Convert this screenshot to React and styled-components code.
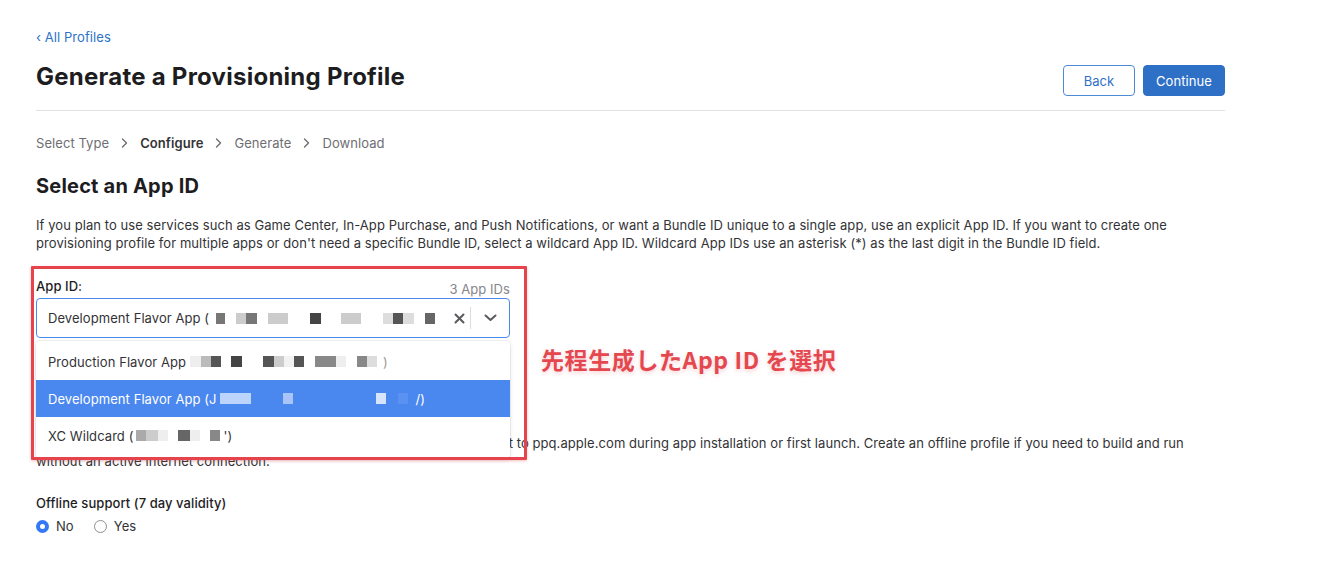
import React from "react";
import styled, { createGlobalStyle } from "styled-components";

const GlobalStyle = createGlobalStyle`
  body {
    margin: 0;
    background: #ffffff;
    font-family: "Inter", "Noto Sans CJK JP", sans-serif;
    letter-spacing: 0.07px;
    color: #333336;
    -webkit-font-smoothing: antialiased;
  }
`;

const Page = styled.div`
  position: relative;
  width: 1189px;
  padding: 28px 0 40px 36px;
`;

const BackLink = styled.a`
  display: block;
  width: fit-content;
  font-size: 13px;
  line-height: 18px;
  color: #2d72c8;
  text-decoration: none;
`;

const Header = styled.div`
  display: flex;
  justify-content: space-between;
  align-items: flex-start;
  margin-top: 15px;
  padding-bottom: 14px;
  border-bottom: 1px solid #e1e1e4;
`;

const Title = styled.h1`
  margin: 0;
  font-size: 24px;
  line-height: 32px;
  font-weight: 700;
  letter-spacing: 0.25px;
  color: #1d1d1f;
`;

const Actions = styled.div`
  display: flex;
  gap: 8px;
  margin-top: 4px;
`;

const Button = styled.button`
  height: 31px;
  min-width: ${({ $w }) => $w}px;
  padding: 0 12px;
  border-radius: 4px;
  font-family: inherit;
  font-size: 13px;
  letter-spacing: 0.07px;
  border: 1px solid ${({ $primary }) => ($primary ? "#2f70c7" : "#4d8bd9")};
  background: ${({ $primary }) => ($primary ? "#2f70c7" : "#ffffff")};
  color: ${({ $primary }) => ($primary ? "#ffffff" : "#2f70c7")};
`;

const Steps = styled.div`
  display: flex;
  align-items: center;
  gap: 12px;
  margin-top: 23px;
  font-size: 13px;
  line-height: 18px;
  color: #6e6e73;
`;

const Step = styled.span`
  color: ${({ $active }) => ($active ? "#333336" : "#6e6e73")};
  font-weight: ${({ $active }) => ($active ? 600 : 400)};
`;

const Chevron = styled.svg`
  width: 7px;
  height: 10px;
`;

const SectionTitle = styled.h2`
  margin: 22px 0 0;
  font-size: 20px;
  line-height: 24px;
  font-weight: 700;
  letter-spacing: 0.2px;
  color: #1d1d1f;
`;

const Paragraph = styled.p`
  margin: ${({ $mt }) => $mt || 18}px 0 0;
  font-size: 13px;
  line-height: 18px;
  white-space: nowrap;
  color: #333336;
`;

const Field = styled.div`
  position: relative;
  width: 474px;
  margin-top: 25px;
`;

const LabelRow = styled.div`
  display: flex;
  justify-content: space-between;
  align-items: flex-start;
  height: 18px;
  font-size: 13px;
  line-height: 18px;
  margin-bottom: 3px;
`;

const Label = styled.label`
  font-weight: 500;
  color: #1d1d1f;
`;

const Count = styled.span`
  color: #86868b;
  margin-top: 3px;
`;

const Select = styled.div`
  display: flex;
  align-items: center;
  height: 40px;
  box-sizing: border-box;
  padding-left: 11px;
  border: 1px solid #4a8af0;
  border-radius: 4px;
  font-size: 13px;
  color: #333336;
`;

const SelectValue = styled.div`
  flex: 1;
  display: flex;
  align-items: center;
  white-space: nowrap;
  overflow: hidden;
`;

const SelectIcon = styled.button`
  display: flex;
  align-items: center;
  justify-content: center;
  width: ${({ $w }) => $w}px;
  height: 100%;
  padding: 0;
  border: none;
  background: none;
  color: #5a5a5e;
`;

const Divider = styled.span`
  width: 1px;
  height: 22px;
  background: #dcdcdf;
`;

const Menu = styled.ul`
  position: absolute;
  top: calc(100% + 3px);
  left: 0;
  right: 0;
  z-index: 2;
  margin: 0;
  padding: 2px 0 4px;
  list-style: none;
  background: #ffffff;
  border-radius: 4px;
  box-shadow: 0 0 0 1px rgba(0, 0, 0, 0.05), 0 2px 5px rgba(0, 0, 0, 0.1);
`;

const Option = styled.li`
  display: flex;
  align-items: center;
  height: 37px;
  padding-left: 12px;
  font-size: 13px;
  white-space: nowrap;
  background: ${({ $selected }) => ($selected ? "#4a87ef" : "transparent")};
  color: ${({ $selected }) => ($selected ? "#ffffff" : "#333336")};
`;

const Masked = styled.span`
  display: inline-flex;
  align-items: center;
  height: 11px;
`;

const Block = styled.span`
  display: inline-block;
  height: 11px;
`;

const HiddenTitle = styled.h2`
  margin: 42px 0 0;
  font-size: 20px;
  line-height: 24px;
  font-weight: 700;
  color: #1d1d1f;
`;

const Fieldset = styled.div`
  margin-top: 24px;
  font-size: 13px;
  line-height: 18px;
`;

const Legend = styled.div`
  font-weight: 500;
  color: #1d1d1f;
`;

const Radios = styled.div`
  display: flex;
  gap: 20px;
  margin-top: 5px;
`;

const RadioLabel = styled.label`
  display: flex;
  align-items: center;
  gap: 7px;
  color: #333336;
`;

const RadioDot = styled.span`
  width: 13px;
  height: 13px;
  box-sizing: border-box;
  border-radius: 50%;
  border: ${({ $on }) => ($on ? "4px solid #3478f6" : "1px solid #8e8e93")};
  background: #ffffff;
`;

const Highlight = styled.div`
  position: absolute;
  left: -5px;
  top: -11px;
  width: 496px;
  height: 194px;
  border: 3px solid #e5444c;
  box-sizing: border-box;
  border-radius: 1px;
  box-shadow: 0 1px 3px rgba(229, 68, 76, 0.35);
  pointer-events: none;
  z-index: 3;
`;

const Note = styled.div`
  position: absolute;
  left: 505px;
  top: 67px;
  font-family: "Noto Sans CJK JP", sans-serif;
  font-size: 23px;
  line-height: 30px;
  font-weight: 700;
  letter-spacing: 0.6px;
  color: #e5474f;
  white-space: nowrap;
  text-shadow: 0 2px 4px rgba(229, 71, 79, 0.25);
`;

const masks = {
  select: [
    [7, 9, "#777"], [11, 10, "#ccc"], [0, 11, "#777"], [11, 20, "#ccc"],
    [22, 11, "#444"], [20, 20, "#ccc"], [22, 10, "#ddd"], [0, 10, "#555"],
    [0, 11, "#ddd"], [11, 10, "#666"],
  ],
  production: [
    [4, 11, "#eee"], [0, 10, "#bbb"], [0, 10, "#555"], [10, 11, "#444"],
    [21, 11, "#555"], [0, 10, "#ccc"], [0, 10, "#f2f2f2"], [0, 10, "#555"],
    [11, 21, "#888"], [0, 10, "#eee"], [11, 10, "#888"], [0, 10, "#ddd"],
  ],
  development: [
    [3, 31, "#bcd3fb"], [32, 10, "#a8c4f8"], [83, 10, "#d7e4fd"], [12, 10, "#5a92f2"],
  ],
  wildcard: [
    [3, 10, "#aaa"], [0, 12, "#ccc"], [0, 10, "#eee"], [10, 12, "#666"],
    [0, 10, "#eee"], [10, 10, "#888"],
  ],
};

const Redacted = ({ items }) => (
  <Masked>
    {items.map(([gap, w, c], i) => (
      <Block key={i} style={{ marginLeft: gap, width: w, background: c }} />
    ))}
  </Masked>
);

const StepArrow = () => (
  <Chevron viewBox="0 0 7 10">
    <path d="M1.5 1l4 4-4 4" fill="none" stroke="#6e6e73" strokeWidth="1.4" strokeLinecap="round" strokeLinejoin="round" />
  </Chevron>
);

export default function App() {
  return (
    <>
      <GlobalStyle />
      <Page>
        <BackLink href="#">‹ All Profiles</BackLink>
        <Header>
          <Title>Generate a Provisioning Profile</Title>
          <Actions>
            <Button $w={72}>Back</Button>
            <Button $w={82} $primary>Continue</Button>
          </Actions>
        </Header>

        <Steps>
          <Step>Select Type</Step>
          <StepArrow />
          <Step $active>Configure</Step>
          <StepArrow />
          <Step>Generate</Step>
          <StepArrow />
          <Step>Download</Step>
        </Steps>

        <SectionTitle>Select an App ID</SectionTitle>
        <Paragraph>
          If you plan to use services such as Game Center, In-App Purchase, and Push Notifications, or want a Bundle ID unique to a single app, use an explicit App ID. If you want to create one
          <br />
          provisioning profile for multiple apps or don't need a specific Bundle ID, select a wildcard App ID. Wildcard App IDs use an asterisk (*) as the last digit in the Bundle ID field.
        </Paragraph>

        <Field>
          <LabelRow>
            <Label>App ID:</Label>
            <Count>3 App IDs</Count>
          </LabelRow>
          <Select>
            <SelectValue>
              Development Flavor App (
              <Redacted items={masks.select} />
            </SelectValue>
            <SelectIcon $w={22}>
              <svg width="11" height="11" viewBox="0 0 11 11">
                <path d="M1.5 1.5l8 8M9.5 1.5l-8 8" stroke="currentColor" strokeWidth="2" strokeLinecap="round" />
              </svg>
            </SelectIcon>
            <Divider />
            <SelectIcon $w={38}>
              <svg width="13" height="8" viewBox="0 0 13 8">
                <path d="M1.5 1.5l5 4.5 5-4.5" fill="none" stroke="currentColor" strokeWidth="2" strokeLinecap="round" strokeLinejoin="round" />
              </svg>
            </SelectIcon>
          </Select>
          <Menu>
            <Option>
              Production Flavor App
              <Redacted items={masks.production} />
              <span style={{ marginLeft: 6, color: "#999" }}>)</span>
            </Option>
            <Option $selected>
              Development Flavor App (J
              <Redacted items={masks.development} />
              <span style={{ marginLeft: 8 }}>/)</span>
            </Option>
            <Option>
              XC Wildcard (
              <Redacted items={masks.wildcard} />
              <span style={{ marginLeft: 3 }}>')</span>
            </Option>
          </Menu>
          <Highlight />
          <Note>先程生成したApp ID を選択</Note>
        </Field>

        <HiddenTitle>Offline Support</HiddenTitle>
        <Paragraph $mt={30}>
          By default, online provisioning profiles require that the app is able to connect to ppq.apple.com during app installation or first launch. Create an offline profile if you need to build and run
          <br />
          without an active internet connection.
        </Paragraph>

        <Fieldset>
          <Legend>Offline support (7 day validity)</Legend>
          <Radios>
            <RadioLabel>
              <RadioDot $on />
              No
            </RadioLabel>
            <RadioLabel>
              <RadioDot />
              Yes
            </RadioLabel>
          </Radios>
        </Fieldset>
      </Page>
    </>
  );
}
